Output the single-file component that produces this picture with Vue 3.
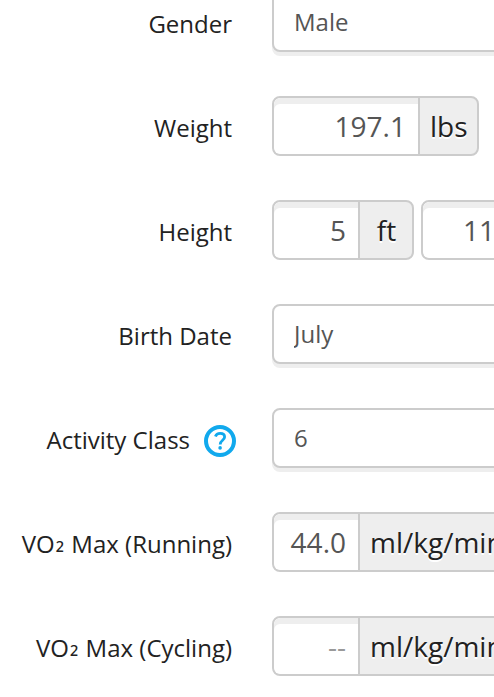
<script setup>
import { ref } from 'vue'

const gender = ref('Male')
const weight = ref('197.1')
const feet = ref('5')
const inches = ref('11')
const month = ref('July')
const activity = ref('6')
const running = ref('44.0')
const cycling = ref('')

const months = ['January', 'February', 'March', 'April', 'May', 'June', 'July', 'August', 'September', 'October', 'November', 'December']
</script>

<template>
  <form class="profile" @submit.prevent>
    <div class="row">
      <label class="name" for="gender">Gender</label>
      <select id="gender" v-model="gender" class="select">
        <option>Male</option>
        <option>Female</option>
      </select>
    </div>

    <div class="row">
      <label class="name" for="weight">Weight</label>
      <div class="groups">
        <div class="group">
          <input id="weight" v-model="weight" class="value wide" type="text" inputmode="decimal" />
          <span class="unit">lbs</span>
        </div>
      </div>
    </div>

    <div class="row">
      <label class="name" for="feet">Height</label>
      <div class="groups">
        <div class="group">
          <input id="feet" v-model="feet" class="value" type="text" inputmode="numeric" />
          <span class="unit short">ft</span>
        </div>
        <div class="group">
          <input v-model="inches" class="value" type="text" inputmode="numeric" aria-label="Height, inches" />
          <span class="unit short">in</span>
        </div>
      </div>
    </div>

    <div class="row">
      <label class="name" for="month">Birth Date</label>
      <select id="month" v-model="month" class="select">
        <option v-for="m in months" :key="m">{{ m }}</option>
      </select>
    </div>

    <div class="row">
      <div class="name with-help">
        <label for="activity">Activity Class</label>
        <button class="help" type="button" aria-label="About activity class">
          <svg viewBox="0 0 32 32" width="32" height="32" fill="none" stroke="#11a9ed" aria-hidden="true">
            <circle cx="16" cy="16" r="14" stroke-width="4" />
            <path d="M11.4 11.4C12.2 9.3 13.9 8.4 16.1 8.4C18.9 8.4 20.6 9.9 20.6 12.1C20.6 15.2 16.2 15.5 16.2 19.4" stroke-width="2.8" />
            <circle cx="16.1" cy="22.9" r="1.8" fill="#11a9ed" stroke="none" />
          </svg>
        </button>
      </div>
      <select id="activity" v-model="activity" class="select">
        <option v-for="n in 10" :key="n">{{ n }}</option>
      </select>
    </div>

    <div class="row">
      <label class="name" for="running">VO<span class="sub">₂</span> Max (Running)</label>
      <div class="groups">
        <div class="group">
          <input id="running" v-model="running" class="value" type="text" inputmode="decimal" />
          <span class="unit">ml/kg/min</span>
        </div>
      </div>
    </div>

    <div class="row">
      <label class="name" for="cycling">VO<span class="sub">₂</span> Max (Cycling)</label>
      <div class="groups">
        <div class="group">
          <input id="cycling" v-model="cycling" class="value" type="text" inputmode="decimal" placeholder="--" />
          <span class="unit">ml/kg/min</span>
        </div>
      </div>
    </div>
  </form>
</template>

<style>
body {
  background: #fff;
  overflow: hidden;
}
</style>

<style scoped>
.profile {
  display: flex;
  flex-direction: column;
  gap: 44px;
  margin-top: -8px;
  padding-bottom: 20px;
  font-family: "Open Sans", "Noto Sans", sans-serif;
  font-size: 24px;
  line-height: 32px;
  color: #222;
}

.row {
  display: grid;
  grid-template-columns: 232px minmax(400px, 1fr);
  column-gap: 40px;
  align-items: center;
}

.name {
  padding-top: 4px;
  text-align: right;
  white-space: nowrap;
}

.sub {
  padding: 0 1px;
  line-height: 0;
  vertical-align: 4px;
}

.with-help {
  display: flex;
  justify-content: flex-end;
  align-items: center;
  gap: 14px;
  margin-right: -4px;
}

.help {
  display: block;
  padding: 2px 0 0;
  border: 0;
  background: none;
  cursor: pointer;
}

.help svg {
  display: block;
}

.select {
  appearance: none;
  box-sizing: border-box;
  width: 100%;
  height: 60px;
  margin: 0;
  padding: 0 20px;
  border: 2px solid #ccc;
  border-radius: 8px;
  background: #fff;
  box-shadow: 0 4px 0 #eee;
  font: inherit;
  color: #555;
}

.groups {
  display: flex;
  gap: 7px;
}

.group {
  display: flex;
  box-sizing: border-box;
  height: 60px;
  border: 2px solid #ccc;
  border-radius: 8px;
  background: #eee;
  overflow: hidden;
}

.value {
  box-sizing: border-box;
  width: 86px;
  margin: 0;
  padding: 0 12px;
  border: 0;
  border-right: 2px solid #ccc;
  border-radius: 6px 0 0 6px;
  background: #fff;
  box-shadow: inset 0 6px 0 #eee;
  font: inherit;
  font-size: 28px;
  text-align: right;
  color: #555;
}

.value.wide {
  width: 146px;
}

.value::placeholder {
  color: #999;
  opacity: 1;
}

.unit {
  padding: 0 9px 0 10px;
  font-size: 28px;
  line-height: 56px;
  text-shadow: 0 2px 0 #fff;
}

.unit.short {
  box-sizing: border-box;
  min-width: 52px;
  text-align: center;
}
</style>
